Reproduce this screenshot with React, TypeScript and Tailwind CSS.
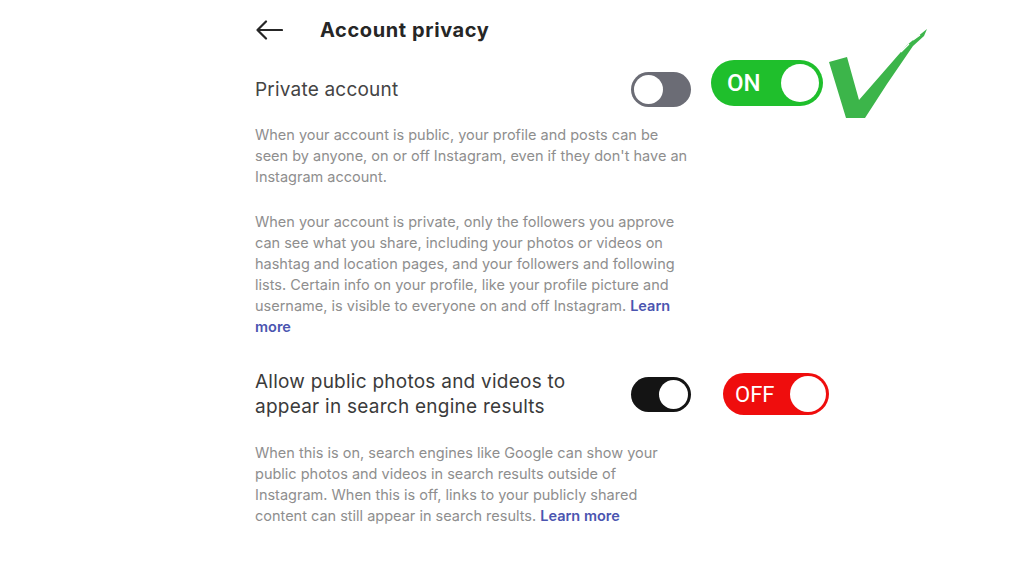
const Desc = ({ children }: { children: React.ReactNode }) => (
  <p className="whitespace-nowrap text-[14.5px] leading-[21px] text-[#8e8e8e]">{children}</p>
);

const LearnMore = ({ text }: { text: string }) => (
  <span className="font-semibold text-[#4b55b0]">{text}</span>
);

const Toggle = ({ on, dark }: { on?: boolean; dark?: boolean }) => (
  <div
    className={`flex h-[35px] w-[60px] items-center rounded-full px-[3px] ${
      dark ? "bg-[#141414]" : "bg-[#6b6c75]"
    } ${on ? "justify-end" : "justify-start"}`}
  >
    <div className="h-[29px] w-[29px] rounded-full bg-white" />
  </div>
);

const Check = () => (
  <svg width="102" height="95" viewBox="0 0 102 95" className="-mt-[32px] ml-[4px]">
    <path
      d="M2 34 L20 29 L32 72 L80 17 L100 1 L97 8 L86 18 L60 56 L38 90 L19 90 Z"
      fill="#3cb54a"
    />
    <path d="M74 24 L82 16 M86 12 L93 7" stroke="#ffffff" strokeWidth="1.2" />
  </svg>
);

export default function App() {
  return (
    <div className="h-[576px] w-[1024px] overflow-hidden bg-white pl-[255px] pt-[10px] font-['Inter',sans-serif]">
      <div className="flex h-[40px] items-center">
        <svg width="28" height="24" viewBox="0 0 28 24" fill="none" stroke="#262626" strokeWidth="2.2">
          <path d="M27 12 H2.5 M11 3.5 L2.5 12 L11 20.5" strokeLinecap="round" strokeLinejoin="round" />
        </svg>
        <h1 className="ml-[37px] text-[20px] tracking-[0.6px] font-bold text-[#262626]">Account privacy</h1>
      </div>

      <div className="mt-[10px] flex h-[48px] items-start">
        <div className="mt-[18px] w-[376px] text-[19px] leading-[24px] tracking-[0.2px] text-[#444]">Private account</div>
        <div className="mt-[12px]">
          <Toggle />
        </div>
        <div className="ml-[20px] flex h-[46px] w-[112px] items-center justify-between rounded-full bg-[#1fbf2c] pl-[16px] pr-[4px] font-['Roboto',sans-serif]">
          <span className="text-[24px] font-medium text-white">ON</span>
          <div className="h-[38px] w-[38px] rounded-full bg-white" />
        </div>
        <Check />
      </div>

      <div className="mt-[16px]">
        <Desc>
          When your account is public, your profile and posts can be
          <br />
          seen by anyone, on or off Instagram, even if they don't have an
          <br />
          Instagram account.
        </Desc>
        <div className="mt-[24px]">
          <Desc>
            When your account is private, only the followers you approve
            <br />
            can see what you share, including your photos or videos on
            <br />
            hashtag and location pages, and your followers and following
            <br />
            lists. Certain info on your profile, like your profile picture and
            <br />
            username, is visible to everyone on and off Instagram. <LearnMore text="Learn" />
            <br />
            <LearnMore text="more" />
          </Desc>
        </div>
      </div>

      <div className="mt-[32px] flex h-[50px] items-center">
        <div className="w-[376px] text-[19px] leading-[25px] tracking-[0.25px] text-[#3b3b3b]">
          Allow public photos and videos to
          <br />
          appear in search engine results
        </div>
        <Toggle on dark />
        <div className="ml-[32px] flex h-[42px] w-[106px] items-center justify-between rounded-full bg-[#ef0d0d] pl-[12px] pr-[3px] font-['Roboto',sans-serif]">
          <span className="text-[22px] text-white">OFF</span>
          <div className="h-[36px] w-[36px] rounded-full bg-white" />
        </div>
      </div>

      <div className="mt-[23px]">
        <Desc>
          When this is on, search engines like Google can show your
          <br />
          public photos and videos in search results outside of
          <br />
          Instagram. When this is off, links to your publicly shared
          <br />
          content can still appear in search results. <LearnMore text="Learn more" />
        </Desc>
      </div>
    </div>
  );
}
